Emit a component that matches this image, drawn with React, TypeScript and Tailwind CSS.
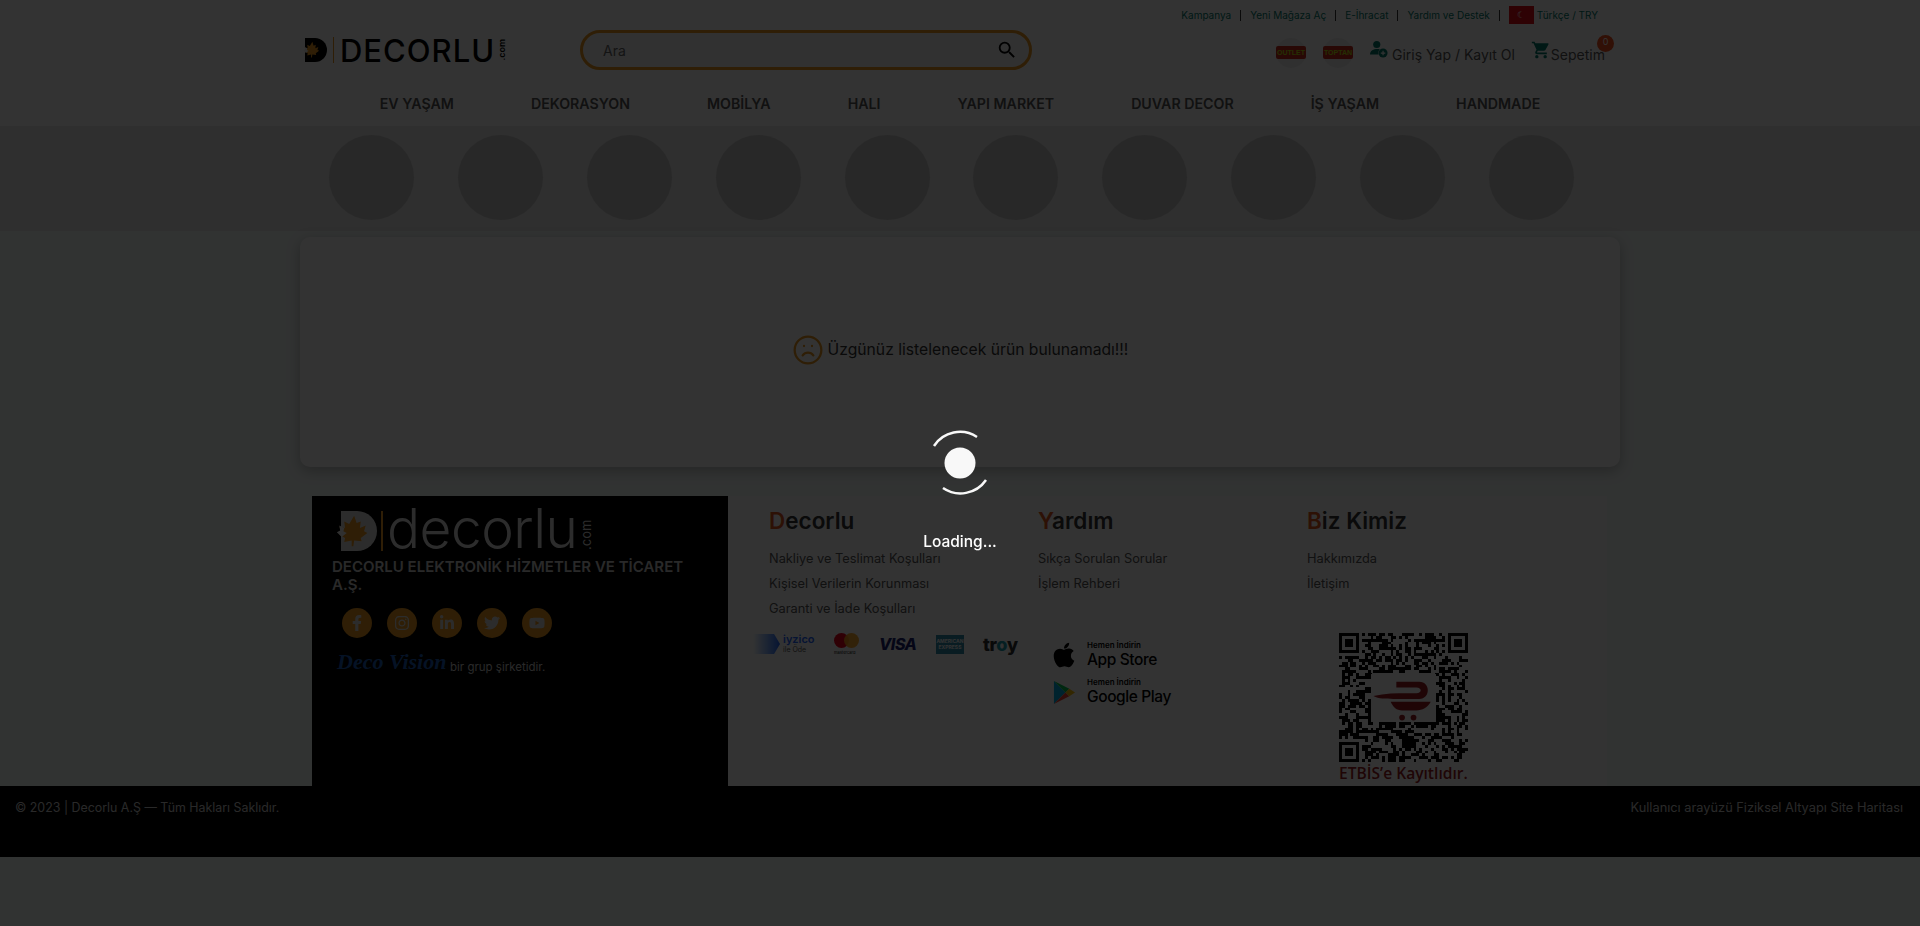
import { FaApple, FaFacebookF, FaInstagram, FaLinkedinIn, FaTwitter, FaYoutube } from 'react-icons/fa';
import { MdSearch, MdShoppingCart } from 'react-icons/md';
import { Frown } from 'lucide-react';

const topLinks = ['Kampanya', 'Yeni Mağaza Aç', 'E-İhracat', 'Yardım ve Destek'];
const navItems = ['EV YAŞAM', 'DEKORASYON', 'MOBİLYA', 'HALI', 'YAPI MARKET', 'DUVAR DECOR', 'İŞ YAŞAM', 'HANDMADE'];
const circles = [0, 1, 2, 3, 4, 5, 6, 7, 8, 9];
const socials = [FaFacebookF, FaInstagram, FaLinkedinIn, FaTwitter, FaYoutube];

const columns = [
  { title: 'Decorlu', links: ['Nakliye ve Teslimat Koşulları', 'Kişisel Verilerin Korunması', 'Garanti ve İade Koşulları'] },
  { title: 'Yardım', links: ['Sıkça Sorulan Sorular', 'İşlem Rehberi'] },
  { title: 'Biz Kimiz', links: ['Hakkımızda', 'İletişim'] },
];

function Leaf({ className }: { className: string }) {
  return (
    <svg viewBox="0 0 40 40" className={className}>
      <path d="M22 2l3 9 5-2-1 8 7-3-2 7 4 2-8 6 1 4-9-1-1 7-2 0 0-7-9 2 1-5-7-4 3-3-3-7 7 2-1-8 6 3z" fill="#e8961f" />
      <path d="M4 14l6 3-1 4 4 2-6 5-6-6 4-2z" fill="#eee" />
    </svg>
  );
}

function HeaderLogo() {
  return (
    <div className="flex items-center w-[203px] h-[30px]">
      <div className="relative w-[22px] h-[24px] rounded-r-full bg-black shrink-0">
        <Leaf className="absolute left-[-2px] top-[3px] w-[17px] h-[17px]" />
      </div>
      <div className="w-[1px] h-[26px] bg-[#e8961f] mx-[6px]" />
      <span className="font-['Inter',sans-serif] text-[31px] leading-none font-medium text-black tracking-[1px] w-[157px] whitespace-nowrap">DECORLU</span>
      <div className="w-[10px] h-[24px] flex items-center justify-center">
        <span className="font-['Inter',sans-serif] text-[9px] font-semibold text-black -rotate-90 whitespace-nowrap">.com</span>
      </div>
    </div>
  );
}

function FooterLogo() {
  return (
    <div className="flex items-center h-[42px] ml-[5px]">
      <div className="relative w-[36px] h-[40px] ml-[4px] rounded-r-full bg-[#ddd] shrink-0">
        <Leaf className="absolute left-[-5px] top-[3px] w-[33px] h-[33px]" />
      </div>
      <div className="w-[2px] h-[40px] bg-[#e8961f] ml-[4px] mr-[4px]" />
      <span className="font-['Inter',sans-serif] text-[55px] leading-none font-light text-[#ddd] tracking-[-0.5px] whitespace-nowrap pb-[5px]">decorlu</span>
      <div className="w-[13px] h-[34px] flex items-center justify-center ml-[3px] mt-[8px]">
        <span className="font-['Inter',sans-serif] text-[13px] text-[#ddd] -rotate-90 whitespace-nowrap">.com</span>
      </div>
    </div>
  );
}

function PersonAdd() {
  return (
    <svg viewBox="0 0 20 20" className="w-[18px] h-[18px] mb-[2px]">
      <circle cx="7.500" cy="5" r="4" fill="#00796b" />
      <path d="M0 16c0-4 4-6 8-6 1 0 2 .1 3 .4-1.600 1.400-2 3.600-1.400 5.600z" fill="#00796b" />
      <circle cx="14.500" cy="14.500" r="5" fill="#00796b" />
      <path d="M14.500 12v5M12 14.500h5" stroke="#fff" strokeWidth="1.300" />
    </svg>
  );
}

function Badge({ label }: { label: string }) {
  return (
    <div className="w-[30px] h-[30px] mt-[5px] rounded-full bg-[#f0f0f0] flex items-center justify-center">
      <span className="bg-[#c92a1c] text-[#b8e60f] text-[7px] leading-[13px] font-bold font-['Liberation_Sans',sans-serif] px-[1px] rounded-[2px] whitespace-nowrap">{label}</span>
    </div>
  );
}

// seeded modules, the code itself is not meant to scan
function QrCode() {
  const size = 45;
  const cells: { x: number; y: number }[] = [];
  let seed = 7919;
  for (let y = 0; y < size; y++) {
    for (let x = 0; x < size; x++) {
      seed = (seed * 1103515245 + 12345) & 0x7fffffff;
      const inFinder = (x < 8 && y < 8) || (x > size - 9 && y < 8) || (x < 8 && y > size - 9);
      if (!inFinder && (seed >> 16) % 100 < 50) cells.push({ x, y });
    }
  }
  const finders = [
    [0, 0],
    [size - 7, 0],
    [0, size - 7],
  ];
  return (
    <svg viewBox={`0 0 ${size} ${size}`} className="w-[129px] h-[129px] shrink-0" shapeRendering="crispEdges">
      {cells.map((c) => (
        <rect key={`${c.x}-${c.y}`} x={c.x} y={c.y} width="1" height="1" fill="#000" />
      ))}
      {finders.map(([x, y]) => (
        <g key={`${x}-${y}`}>
          <rect x={x} y={y} width="7" height="7" fill="#000" />
          <rect x={x + 1} y={y + 1} width="5" height="5" fill="#fff" />
          <rect x={x + 2} y={y + 2} width="3" height="3" fill="#000" />
        </g>
      ))}
      <rect x="11" y="14" width="23" height="17" rx="1" fill="#fff" />
      <g shapeRendering="auto">
        <path d="M12 22c4-1 8-1 12-1h3c2 0 2-2 0-2h-7v-2h8c4 0 4 6 0 6h-9c-3 0-5 0-7-1z" fill="#9a1c22" />
        <path d="M18 24h14c-1 2-3 3-5 3h-5c-2 0-3-1-4-3z" fill="#9a1c22" />
        <circle cx="22" cy="29.500" r="1" fill="#9a1c22" />
        <circle cx="26" cy="29.500" r="1" fill="#9a1c22" />
      </g>
    </svg>
  );
}

function PaymentRow() {
  return (
    <div className="flex items-center h-[24px] ml-[-16px] mt-[11px] font-['Inter',sans-serif]">
      <div className="w-[27px] h-[20px] bg-gradient-to-r from-white to-[#1e64ff] [clip-path:polygon(0_0,78%_0,100%_50%,78%_100%,0_100%)]" />
      <div className="flex flex-col ml-[3px] w-[31px]">
        <span className="text-[11px] leading-[11px] font-semibold text-[#1e64ff]">iyzico</span>
        <span className="text-[7px] leading-[10px] text-[#555]">ile Öde</span>
      </div>
      <div className="relative w-[25px] h-[22px] ml-[20px]">
        <div className="absolute left-0 top-0 w-[15px] h-[15px] rounded-full bg-[#eb001b]" />
        <div className="absolute right-0 top-0 w-[15px] h-[15px] rounded-full bg-[#f79e1b]/90" />
        <span className="absolute left-0 bottom-0 text-[4px] leading-[5px] text-black">mastercard</span>
      </div>
      <span className="ml-[20px] w-[38px] text-[16px] font-extrabold italic text-[#1a1f71] tracking-[-0.5px]">VISA</span>
      <div className="ml-[19px] w-[28px] h-[19px] bg-[#2e8aa8] flex flex-col items-center justify-center text-white text-[5px] leading-[6px] font-bold">
        <span>AMERICAN</span>
        <span>EXPRESS</span>
      </div>
      <span className="ml-[19px] w-[38px] text-[18px] font-extrabold text-[#2d2d2d] tracking-[-0.3px]">
        tr<span className="text-[#1a9aa8]">o</span>y
      </span>
    </div>
  );
}

function GooglePlayIcon() {
  return (
    <svg viewBox="0 0 24 26" className="w-[23px] h-[25px]">
      <path d="M1 1l12 12L1 25z" fill="#00b0e6" />
      <path d="M1 1l16 8-4 4z" fill="#00c853" />
      <path d="M1 25l16-8-4-4z" fill="#f44336" />
      <path d="M17 9l6 4-6 4-4-4z" fill="#ffc107" />
    </svg>
  );
}

function StoreBadge({ icon, name }: { icon: React.ReactNode; name: string }) {
  return (
    <div className="flex items-center h-[30px] font-['Inter',sans-serif] text-black">
      <div className="w-[24px] flex justify-center shrink-0">{icon}</div>
      <div className="flex flex-col ml-[11px]">
        <span className="text-[8px] leading-[9px] font-semibold">Hemen İndirin</span>
        <span className="text-[15.500px] leading-[19px] font-medium tracking-[-0.4px] whitespace-nowrap">{name}</span>
      </div>
    </div>
  );
}

export default function App() {
  return (
    <div className="min-h-[926px] bg-[#f6fcfa] font-['Inter',sans-serif]">
      <header className="bg-white h-[126px]">
        <div className="w-[1320px] mx-auto">
          <div className="flex items-center justify-end h-[30px] pr-[22px] text-[10px] text-[#00796b]">
            {topLinks.map((l) => (
              <span key={l} className="flex items-center">
                {l}
                <span className="w-[1px] h-[11px] bg-[#333] mx-[9px]" />
              </span>
            ))}
            <div className="w-[25px] h-[18px] bg-[#e30a17] flex items-center justify-center mr-[3px] text-white text-[9px]">☾</div>
            <span>Türkçe / TRY</span>
          </div>
          <div className="flex items-center h-[40px] pl-[5px]">
            <HeaderLogo />
            <div className="flex items-center justify-between w-[452px] h-[40px] ml-[72px] pl-[20px] pr-[11px] rounded-full border-[3px] border-[#e8961f] bg-[#f5f5f5]">
              <span className="text-[14px] text-[#666]">Ara</span>
              <MdSearch className="w-[22px] h-[22px] text-black" />
            </div>
            <div className="flex items-center ml-[244px] h-[40px] relative">
              <Badge label="OUTLET" />
              <div className="w-[17px]" />
              <Badge label="TOPTAN" />
              <div className="w-[17px]" />
              <PersonAdd />
              <span className="text-[14px] text-[#555] ml-[4px] mt-[8px] whitespace-nowrap">Giriş Yap / Kayıt Ol</span>
              <MdShoppingCart className="w-[20px] h-[20px] text-[#00796b] ml-[16px]" />
              <span className="text-[14px] text-[#555] mt-[8px]">Sepetim</span>
              <span className="absolute right-[-9px] top-[5px] w-[17px] h-[17px] rounded-full bg-[#f4511e] text-white text-[9px] leading-[14px] text-center">0</span>
            </div>
          </div>
          <nav className="flex items-center justify-center gap-[77px] h-[56px] pt-[11px] text-[14.200px] font-semibold text-[#555]">
            {navItems.map((n) => (
              <span key={n} className="whitespace-nowrap">{n}</span>
            ))}
          </nav>
        </div>
      </header>

      <section className="bg-[#e8e8e8] h-[105px] flex items-center justify-center gap-[43.850px] pr-[17px] pb-[2px]">
        {circles.map((c) => (
          <div key={c} className="w-[85px] h-[85px] rounded-full bg-[#c8c8c8]" />
        ))}
      </section>

      <main className="w-[1320px] mx-auto mt-[6px] h-[230px] bg-white rounded-[10px] shadow-[0_4px_14px_rgba(0,0,0,0.25)] flex items-center justify-center pb-[5px]">
        <Frown className="w-[32px] h-[32px] text-[#e8961f]" strokeWidth={1.700} />
        <span className="text-[15.700px] text-[#333] ml-[4px]">Üzgünüz listelenecek ürün bulunamadı!!!</span>
      </main>

      <footer className="mt-[29px]">
        <div className="w-[1295px] ml-[312px] h-[290px] bg-white flex">
          <div className="w-[416px] h-full bg-black pt-[14px] pl-[20px]">
            <FooterLogo />
            <p className="text-[15px] leading-[18px] font-semibold text-[#ccc] mt-[6px] w-[370px]">DECORLU ELEKTRONİK HİZMETLER VE TİCARET A.Ş.</p>
            <div className="flex gap-[15px] ml-[10px] mt-[14px]">
              {socials.map((Icon, i) => (
                <div key={i} className="w-[30px] h-[30px] rounded-full bg-[#e8961f] flex items-center justify-center">
                  <Icon className="w-[16px] h-[16px] text-[#ddd]" />
                </div>
              ))}
            </div>
            <div className="flex items-end ml-[5px] mt-[10px]">
              <span className="font-['Liberation_Serif',serif] italic font-bold text-[22px] leading-[28px] text-[#1c5db8] w-[113px] whitespace-nowrap">Deco Vision</span>
              <span className="text-[11.500px] text-[#ccc]">bir grup şirketidir.</span>
            </div>
          </div>
          <div className="flex-1 flex pl-[41px] pt-[11px]">
            {columns.map((col, i) => (
              <div key={col.title} className="w-[269px]">
                <h3 className="text-[22.500px] leading-[28px] font-semibold text-[#333]">
                  <span className="text-[#e2541b]">{col.title[0]}</span>
                  {col.title.slice(1)}
                </h3>
                <ul className="mt-[11px] h-[75px] text-[12.800px] leading-[25px] text-[#555]">
                  {col.links.map((l) => (
                    <li key={l} className="whitespace-nowrap">{l}</li>
                  ))}
                </ul>
                <div className="mt-[10px]">
                  {i === 0 && <PaymentRow />}
                  {i === 1 && (
                    <div className="flex flex-col gap-[7px] ml-[14px] mt-[19px]">
                      <StoreBadge icon={<FaApple className="w-[26px] h-[28px] text-black" />} name="App Store" />
                      <StoreBadge icon={<GooglePlayIcon />} name="Google Play" />
                    </div>
                  )}
                  {i === 2 && (
                    <div className="flex flex-col ml-[32px] mt-[12px]">
                      <QrCode />
                      <span className="font-['Open_Sans',sans-serif] font-semibold text-[15.600px] leading-[20px] mt-[1px] text-[#9a1c22] whitespace-nowrap">ETBİS’e Kayıtlıdır.</span>
                    </div>
                  )}
                </div>
              </div>
            ))}
          </div>
        </div>
        <div className="h-[71px] bg-black flex items-start justify-between pl-[15px] pr-[17px] pt-[13px] leading-[18px] text-[#ccc]">
          <span className="text-[12.400px]">© 2023 | Decorlu A.Ş — Tüm Hakları Saklıdır.</span>
          <span className="text-[12.800px]">Kullanıcı arayüzü Fiziksel Altyapı Site Haritası</span>
        </div>
      </footer>

      <div className="fixed inset-0 bg-black/80 flex flex-col items-center">
        <svg viewBox="0 0 70 70" className="w-[70px] h-[70px] mt-[428px]">
          <circle cx="35" cy="35" r="15.500" fill="#f8f8f8" />
          <path d="M9 18A31 31 0 0 1 52 9" fill="none" stroke="#f8f8f8" strokeWidth="2.500" />
          <path d="M18 60A31 31 0 0 0 61 52" fill="none" stroke="#f8f8f8" strokeWidth="2.500" />
        </svg>
        <span className="mt-[34px] text-[15.500px] leading-[20px] font-medium text-white">Loading...</span>
      </div>
    </div>
  );
}
